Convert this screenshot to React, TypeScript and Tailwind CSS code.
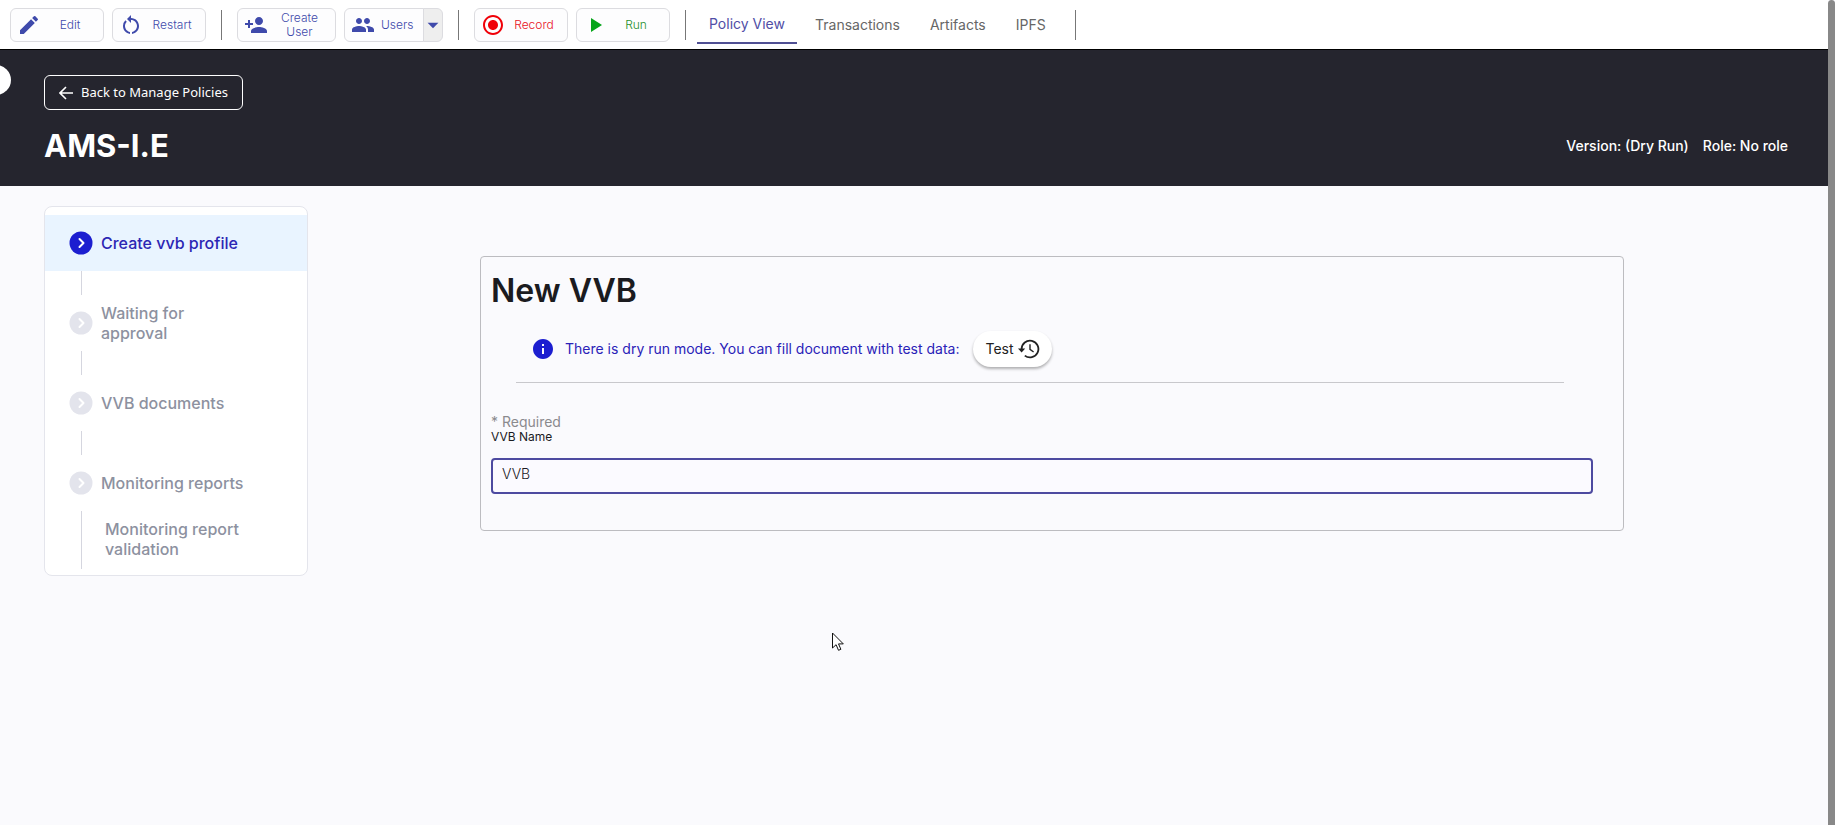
import React from "react";
import {
  MdArrowDropDown,
  MdEdit,
  MdGroup,
  MdInfo,
  MdPersonAdd,
  MdPlayArrow,
  MdRadioButtonChecked,
  MdRestartAlt,
} from "react-icons/md";

const toolButton =
  "flex h-[34px] items-center rounded-md border border-[#dcdce0] bg-[#fdfdfe] pr-1 pl-1.5 text-xs font-light leading-[14px]";

function Divider() {
  return <span className="h-[30px] w-px bg-[#777]" />;
}

type ToolProps = { icon: React.ReactNode; label: string; tone: string; wide?: boolean };

function ToolButton({ icon, label, tone, wide }: ToolProps) {
  return (
    <button type="button" className={`${toolButton} ${tone} ${wide ? "w-[99px]" : "w-[94px]"}`}>
      {icon}
      <span className="flex-1 px-2 text-center">{label}</span>
    </button>
  );
}

function Toolbar() {
  return (
    <div className="flex h-[50px] items-center gap-[15px] border-b border-black bg-white pl-[10px]">
      <div className="flex gap-2">
        <ToolButton icon={<MdEdit size={24} className="shrink-0" />} label="Edit" tone="text-[#3f4aab]" />
        <ToolButton icon={<MdRestartAlt size={24} className="shrink-0" />} label="Restart" tone="text-[#3f4aab]" />
      </div>
      <Divider />
      <div className="flex gap-2">
        <ToolButton icon={<MdPersonAdd size={24} className="shrink-0" />} label="Create User" tone="text-[#3f4aab]" wide />
        <div className="flex">
          <button type="button" className="flex h-[34px] w-[80px] items-center gap-1.5 rounded-l-md border border-[#dcdce0] bg-[#fdfdfe] pl-1.5 text-xs font-light text-[#3f4aab]">
            <MdGroup size={24} />
            Users
          </button>
          <button type="button" aria-label="More users" className="-ml-px flex w-5 items-center justify-center rounded-r-md border border-[#dcdce0] bg-[#eee] text-[#3f4aab]">
            <MdArrowDropDown size={26} className="shrink-0" />
          </button>
        </div>
      </div>
      <Divider />
      <div className="flex gap-2">
        <ToolButton icon={<MdRadioButtonChecked size={24} className="shrink-0 text-[#f00008]" />} label="Record" tone="text-[#e8101c]" />
        <ToolButton icon={<MdPlayArrow size={24} className="shrink-0 text-[#06a51a]" />} label="Run" tone="text-[#1f8f2c]" />
      </div>
      <Divider />
      <nav className="-ml-1 flex h-full items-center text-sm text-[#666]">
        <a href="#policy" className="flex h-[38px] items-center border-b-2 border-[#4f4f93] px-3 text-[#504ea6]">Policy View</a>
        <a href="#transactions" className="px-[18px]">Transactions</a>
        <a href="#artifacts" className="px-3">Artifacts</a>
        <a href="#ipfs" className="pr-[14px] pl-[18px]">IPFS</a>
      </nav>
      <Divider />
    </div>
  );
}

function Header() {
  return (
    <header className="relative flex h-[136px] flex-col justify-between bg-[#25252e] pt-[25px] pr-10 pb-5 pl-11 text-white">
      <span className="absolute top-[15px] -left-[19px] h-[30px] w-[30px] rounded-full bg-white" />
      <button type="button" className="flex h-[35px] items-center gap-2 self-start rounded-md border border-white px-3.5 font-['Noto_Sans',sans-serif] text-[13px]">
        <svg viewBox="0 0 14 14" className="h-3.5 w-3.5" fill="none" stroke="currentColor" strokeWidth="1.6">
          <path d="M14 7H1.2M7 1 1 7l6 6" />
        </svg>
        Back to Manage Policies
      </button>
      <div className="flex items-center justify-between">
        <h1 className="text-[31px] leading-10 font-bold">AMS-I.E</h1>
        <div className="flex gap-3.5 text-sm leading-4 font-medium">
          <span>Version: (Dry Run)</span>
          <span>Role: No role</span>
        </div>
      </div>
    </header>
  );
}

function Step({ label, active }: { label: string; active?: boolean }) {
  return (
    <a
      href="#step"
      className={`flex h-14 items-center gap-2 pr-14 pl-6 ${active ? "bg-[#e9f4ff] text-[#2c26b4]" : "text-[#8d91a0]"}`}
    >
      <svg viewBox="0 0 24 24" className={`h-6 w-6 shrink-0 ${active ? "text-[#1c1ed0]" : "text-[#e3e4ec]"}`}>
        <circle cx="12" cy="12" r="11.5" fill="currentColor" />
        <path d="m10.5 8 4 4-4 4" fill="none" stroke="#fff" strokeWidth="2" strokeLinecap="round" strokeLinejoin="round" />
      </svg>
      <span>{label}</span>
    </a>
  );
}

function Connector() {
  return <div className="ml-9 h-6 w-px bg-[#d5d6df]" />;
}

function Steps() {
  return (
    <aside className="w-[264px] shrink-0 rounded-lg border border-[#e4e5ec] bg-white pt-2 pb-1.5 text-base leading-5 font-medium">
      <Step label="Create vvb profile" active />
      <Connector />
      <Step label="Waiting for approval" />
      <Connector />
      <Step label="VVB documents" />
      <Connector />
      <Step label="Monitoring reports" />
      <div className="ml-9 flex h-[58px] border-l border-[#d5d6df] pt-2 pr-12 pl-[23px]">
        <a href="#validation" className="text-[#8d91a0]">Monitoring report validation</a>
      </div>
    </aside>
  );
}

function HistoryIcon() {
  return (
    <svg viewBox="0 0 22 20" className="h-5 w-[22px]" fill="none" stroke="currentColor" strokeWidth="1.8">
      <path d="M3.6 11V10a8.4 8.4 0 1 1 3.2 6.6" />
      <path d="M12 5.2v5.2l3.6 2.6" strokeWidth="1.4" />
      <path d="M0 9.6h7.2L3.6 13.4z" fill="currentColor" stroke="none" />
    </svg>
  );
}

function VvbForm() {
  return (
    <form className="mt-[50px] mr-[204px] ml-[172px] flex-1 rounded border border-[#bcbcc0] px-[10px] pt-3.5 pb-9 text-[#1b1b1f]">
      <h2 className="text-[32px] leading-10 font-semibold">New VVB</h2>
      <div className="mr-[49px] ml-[25px] flex h-[72px] items-center border-b border-[#c8c8cc] pt-1 pl-[15px] text-sm text-[#2a22b8]">
        <MdInfo size={24} className="text-[#1c1ed0]" />
        <span className="ml-[10px]">There is dry run mode. You can fill document with test data:</span>
        <button type="button" className="ml-3.5 flex h-9 items-center gap-1 rounded-full bg-white px-3 text-[#222] shadow-[0_2px_3px_rgba(0,0,0,0.3)]">
          Test
          <HistoryIcon />
        </button>
      </div>
      <p className="mt-[31px] text-sm leading-4 text-[#8a8a8e]">* Required</p>
      <label htmlFor="vvb-name" className="block text-xs leading-[14px]">VVB Name</label>
      <input
        id="vvb-name"
        defaultValue="VVB"
        className="mt-3.5 block h-9 w-[calc(100%-20px)] rounded border-2 border-[#4d4aa0] bg-[#fbfaff] px-[9px] pb-1.5 text-sm font-light outline-none"
      />
    </form>
  );
}

export default function App() {
  return (
    <div className="relative flex min-h-screen bg-[#fafafd] font-['Inter',sans-serif]">
      <div className="min-w-0 flex-1">
        <Toolbar />
        <Header />
        <main className="flex items-start pt-5 pl-11">
          <Steps />
          <VvbForm />
        </main>
      </div>
      <div className="w-[7px] rounded-t bg-[#888]" />
      <svg viewBox="0 0 12 20" className="absolute top-[632px] left-[832px] h-5 w-3">
        <path d="M.5 1v15l3.6-3.3 2.4 5.6 2.4-1-2.4-5.4h4.8z" fill="#fff" stroke="#111" />
      </svg>
    </div>
  );
}
